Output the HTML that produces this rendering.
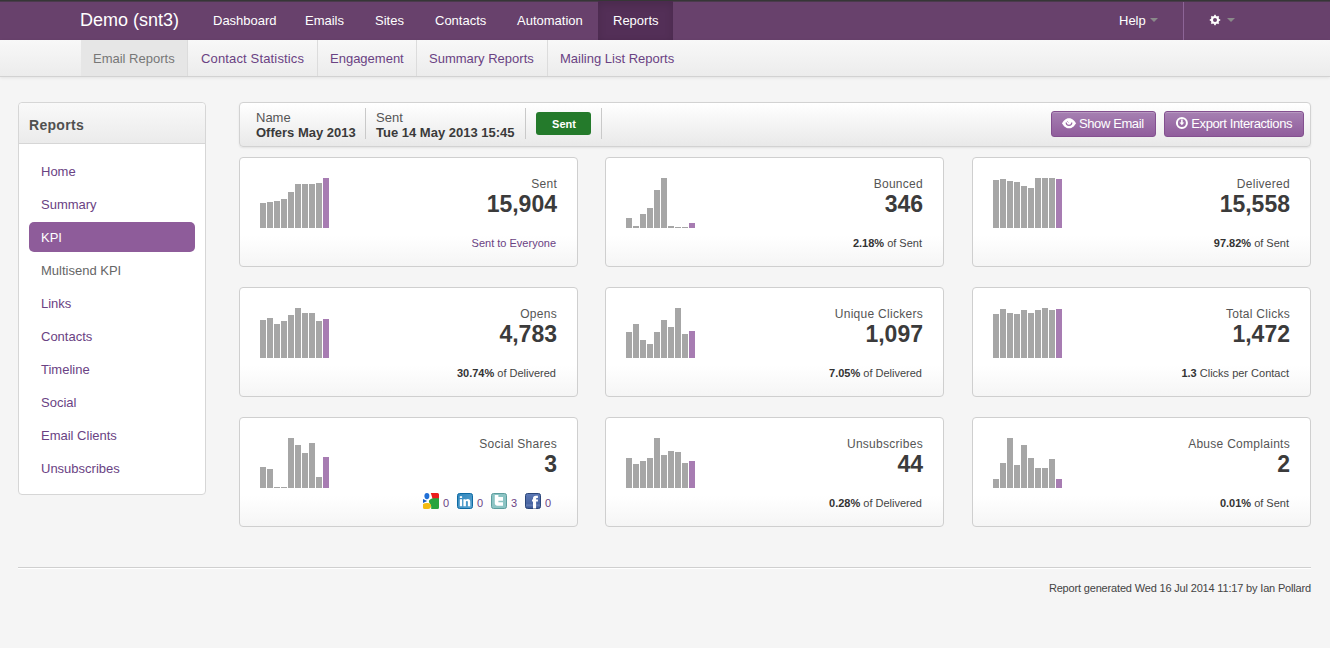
<!DOCTYPE html>
<html><head><meta charset="utf-8">
<style>
*{box-sizing:border-box;margin:0;padding:0}
html,body{width:1330px;height:648px;overflow:hidden}
body{background:#f5f5f5;font-family:"Liberation Sans",sans-serif;font-size:13px;color:#444;position:relative}
.abs{position:absolute}
#nav{position:absolute;left:0;top:0;width:1330px;height:40px;background:#68416c;border-top:1px solid #363636;box-shadow:inset 0 1px 0 #4a3a4c}
#nav .brand{position:absolute;left:80px;top:8px;font-size:18px;color:#fff;line-height:22px}
#nav .it{position:absolute;top:0;height:39px;line-height:39px;color:#fff;font-size:13px;padding:0 15px}
#nav .act{background:#532f57;box-shadow:inset 0 3px 8px rgba(0,0,0,.13)}
#nav .div{position:absolute;left:1183px;top:1px;width:1px;height:38px;background:#8d6597}
.caret{position:absolute;width:0;height:0;border-left:4px solid transparent;border-right:4px solid transparent;border-top:4px solid #8a8a8a}
#sub{position:absolute;left:0;top:40px;width:1330px;height:37px;background:linear-gradient(#f8f8f8,#ececec);border-bottom:1px solid #d2d2d2;box-shadow:0 1px 3px rgba(0,0,0,.08)}
#sub .t{position:absolute;top:0;height:36px;line-height:38px;color:#6a4283;font-size:13px;padding-left:12px;border-left:1px solid #dcdcdc}
#sub .t.act{background:#e6e6e6;color:#777;border-left:none}
#side{position:absolute;left:18px;top:102px;width:188px;height:393px;background:#fff;border:1px solid #d6d6d6;border-radius:4px}
#side .hd{height:41px;background:linear-gradient(#f9f9f9,#ebebeb);border-bottom:1px solid #d6d6d6;border-radius:4px 4px 0 0;font-weight:bold;font-size:14px;color:#505050;padding-left:10px;line-height:44px;letter-spacing:.3px}
#side .li{position:absolute;left:10px;width:166px;height:30px;line-height:30px;padding-left:12px;color:#6a4283;font-size:13px}
#side .li.act{background:#8e5c9a;color:#fff;border-radius:5px}
#side .li.grey{color:#666}
#info{position:absolute;left:239px;top:102px;width:1072px;height:45px;background:linear-gradient(#fff,#e9e9e9);border:1px solid #d2d2d2;border-radius:4px;box-shadow:0 1px 2px rgba(0,0,0,.08)}
.sep{position:absolute;top:5px;width:1px;height:31px;background:#c9c9c9}
.lbl{position:absolute;font-size:13px;color:#555;line-height:15px}
.val{position:absolute;font-size:13px;color:#3a3a3a;font-weight:bold;line-height:15px}
.badge{position:absolute;left:296px;top:9px;width:55px;height:23px;background:#247a2b;border-radius:3px;color:#fff;font-weight:bold;font-size:11px;line-height:24px;text-align:center;padding-left:1px}
.btn{position:absolute;top:8px;height:26px;background:linear-gradient(#a680b2,#905d9c);border:1px solid #83508f;border-radius:3px;color:#fff;font-size:13px;line-height:24px;box-shadow:inset 0 1px 0 rgba(255,255,255,.2)}
.bt{position:absolute;top:0;letter-spacing:-.4px;white-space:nowrap}
.card{position:absolute;width:339px;height:110px;background:linear-gradient(#fff 72%,#f5f5f5);border:1px solid #cfcfcf;border-radius:4px}
.chart{position:absolute;left:20px;top:20px;width:70px;height:50px}
.chart i{position:absolute;bottom:0;width:6px;background:#a6a6a6}
.chart i.p{background:#a77cb2}
.card .ttl{position:absolute;right:20px;top:19px;font-size:12px;color:#555;letter-spacing:.28px;line-height:14px;text-align:right;white-space:nowrap}
.card .num{position:absolute;right:20px;top:33px;font-size:23px;font-weight:bold;color:#3b3b3b;line-height:26px;text-align:right}
.card .ft{position:absolute;right:21px;top:78px;font-size:11px;color:#444;line-height:14px;text-align:right;white-space:nowrap}
.card .ft b{color:#333}
.card .ft.lnk{color:#6a4283}
.sn{position:absolute;top:78px;font-size:11px;line-height:14px;color:#6a4283}
#hr{position:absolute;left:18px;top:567px;width:1293px;height:2px;border-top:1px solid #cfcfcf;border-bottom:1px solid #fff}
#foot{position:absolute;right:19px;top:581px;font-size:11px;color:#444;line-height:14px;letter-spacing:-.17px}
</style></head><body>
<div id="nav">
  <div class="brand">Demo (snt3)</div>
  <div class="it" style="left:198px">Dashboard</div>
  <div class="it" style="left:290px">Emails</div>
  <div class="it" style="left:360px">Sites</div>
  <div class="it" style="left:420px">Contacts</div>
  <div class="it" style="left:502px">Automation</div>
  <div class="it act" style="left:598px;width:75px">Reports</div>
  <div class="it" style="left:1104px">Help</div>
  <div class="caret" style="left:1150px;top:17px"></div>
  <div class="div"></div>
  <svg class="abs" style="left:1209px;top:12.7px" width="12" height="12" viewBox="0 0 12 12"><rect x="5.15" y="0.8" width="1.7" height="2" fill="#fff" transform="rotate(0 6 6)"/><rect x="5.15" y="0.8" width="1.7" height="2" fill="#fff" transform="rotate(45 6 6)"/><rect x="5.15" y="0.8" width="1.7" height="2" fill="#fff" transform="rotate(90 6 6)"/><rect x="5.15" y="0.8" width="1.7" height="2" fill="#fff" transform="rotate(135 6 6)"/><rect x="5.15" y="0.8" width="1.7" height="2" fill="#fff" transform="rotate(180 6 6)"/><rect x="5.15" y="0.8" width="1.7" height="2" fill="#fff" transform="rotate(225 6 6)"/><rect x="5.15" y="0.8" width="1.7" height="2" fill="#fff" transform="rotate(270 6 6)"/><rect x="5.15" y="0.8" width="1.7" height="2" fill="#fff" transform="rotate(315 6 6)"/><circle cx="6" cy="6" r="4.1" fill="#fff"/><circle cx="6" cy="6" r="2" fill="#68416c"/></svg>
  <div class="caret" style="left:1227px;top:17px"></div>
</div>
<div id="sub">
  <div class="t act" style="left:81px;width:106px">Email Reports</div>
  <div class="t" style="left:187px;width:131px;letter-spacing:.15px;padding-left:13px">Contact Statistics</div>
  <div class="t" style="left:317px;width:100px">Engagement</div>
  <div class="t" style="left:416px;width:132px">Summary Reports</div>
  <div class="t" style="left:547px;width:142px">Mailing List Reports</div>
</div>

<div id="side">
  <div class="hd">Reports</div>
  <div class="li" style="top:54px">Home</div>
  <div class="li" style="top:87px">Summary</div>
  <div class="li act" style="top:119px;line-height:32px">KPI</div>
  <div class="li grey" style="top:153px">Multisend KPI</div>
  <div class="li" style="top:186px">Links</div>
  <div class="li" style="top:219px">Contacts</div>
  <div class="li" style="top:252px">Timeline</div>
  <div class="li" style="top:285px">Social</div>
  <div class="li" style="top:318px">Email Clients</div>
  <div class="li" style="top:351px">Unsubscribes</div>
</div>

<div id="info">
  <div class="lbl" style="left:16px;top:7px">Name</div>
  <div class="val" style="left:16px;top:22px">Offers May 2013</div>
  <div class="sep" style="left:125px"></div>
  <div class="lbl" style="left:136px;top:7px">Sent</div>
  <div class="val" style="left:136px;top:22px">Tue 14 May 2013 15:45</div>
  <div class="sep" style="left:285px"></div>
  <div class="badge">Sent</div>
  <div class="sep" style="left:361px"></div>
  <div class="btn" style="left:811px;width:105px"><svg class="abs" style="left:10px;top:6px" width="14" height="11" viewBox="0 0 14 11"><path fill="#fff" d="M7 0.3C3.6 0.3 1.2 3 0.2 5.2 1.2 7.6 3.6 10.3 7 10.3S12.8 7.6 13.8 5.2C12.8 3 10.4 0.3 7 0.3z"/><path d="M4.2 4.6A2.8 2.8 0 0 0 9.8 4.6" fill="none" stroke="#9a69a6" stroke-width="1.2"/><path d="M5.4 3.4l1 1" stroke="#9a69a6" stroke-width="0.9"/></svg><span class="bt" style="left:27px">Show Email</span></div>
  <div class="btn" style="left:924px;width:140px"><svg class="abs" style="left:10px;top:4px" width="14" height="14" viewBox="0 0 14 14"><circle cx="6.9" cy="6.9" r="5" fill="none" stroke="#fff" stroke-width="2"/><path fill="#fff" d="M6.1 3.5h1.6v3h1.6L6.9 9.3 4.5 6.5h1.6z"/></svg><span class="bt" style="left:26.3px">Export Interactions</span></div>
</div>

<div id="cards">
<div class="card" style="left:239px;top:157px"><div class="chart"><i style="left:0px;height:25px"></i><i style="left:7px;height:26px"></i><i style="left:14px;height:27px"></i><i style="left:21px;height:29px"></i><i style="left:28px;height:36px"></i><i style="left:35px;height:44px"></i><i style="left:42px;height:44px"></i><i style="left:49px;height:44px"></i><i style="left:56px;height:45px"></i><i style="left:63px;height:50px" class=p></i></div><div class="ttl">Sent</div><div class="num">15,904</div><div class="ft lnk">Sent to Everyone</div></div>
<div class="card" style="left:605px;top:157px"><div class="chart"><i style="left:0px;height:10px"></i><i style="left:7px;height:2px"></i><i style="left:14px;height:14px"></i><i style="left:21px;height:20px"></i><i style="left:28px;height:38px"></i><i style="left:35px;height:50px"></i><i style="left:42px;height:2px"></i><i style="left:49px;height:1px"></i><i style="left:56px;height:1px"></i><i style="left:63px;height:5px" class=p></i></div><div class="ttl">Bounced</div><div class="num">346</div><div class="ft"><b>2.18%</b> of Sent</div></div>
<div class="card" style="left:972px;top:157px"><div class="chart"><i style="left:0px;height:48px"></i><i style="left:7px;height:49px"></i><i style="left:14px;height:47px"></i><i style="left:21px;height:46px"></i><i style="left:28px;height:42px"></i><i style="left:35px;height:40px"></i><i style="left:42px;height:50px"></i><i style="left:49px;height:50px"></i><i style="left:56px;height:50px"></i><i style="left:63px;height:49px" class=p></i></div><div class="ttl">Delivered</div><div class="num">15,558</div><div class="ft"><b>97.82%</b> of Sent</div></div>
<div class="card" style="left:239px;top:287px"><div class="chart"><i style="left:0px;height:38px"></i><i style="left:7px;height:40px"></i><i style="left:14px;height:34px"></i><i style="left:21px;height:37px"></i><i style="left:28px;height:43px"></i><i style="left:35px;height:50px"></i><i style="left:42px;height:45px"></i><i style="left:49px;height:45px"></i><i style="left:56px;height:37px"></i><i style="left:63px;height:39px" class=p></i></div><div class="ttl">Opens</div><div class="num">4,783</div><div class="ft"><b>30.74%</b> of Delivered</div></div>
<div class="card" style="left:605px;top:287px"><div class="chart"><i style="left:0px;height:26px"></i><i style="left:7px;height:34px"></i><i style="left:14px;height:18px"></i><i style="left:21px;height:14px"></i><i style="left:28px;height:26px"></i><i style="left:35px;height:38px"></i><i style="left:42px;height:31px"></i><i style="left:49px;height:50px"></i><i style="left:56px;height:24px"></i><i style="left:63px;height:27px" class=p></i></div><div class="ttl">Unique Clickers</div><div class="num">1,097</div><div class="ft"><b>7.05%</b> of Delivered</div></div>
<div class="card" style="left:972px;top:287px"><div class="chart"><i style="left:0px;height:44px"></i><i style="left:7px;height:49px"></i><i style="left:14px;height:45px"></i><i style="left:21px;height:44px"></i><i style="left:28px;height:48px"></i><i style="left:35px;height:45px"></i><i style="left:42px;height:48px"></i><i style="left:49px;height:50px"></i><i style="left:56px;height:48px"></i><i style="left:63px;height:49px" class=p></i></div><div class="ttl">Total Clicks</div><div class="num">1,472</div><div class="ft"><b>1.3</b> Clicks per Contact</div></div>
<div class="card" style="left:239px;top:417px"><div class="chart"><i style="left:0px;height:21px"></i><i style="left:7px;height:19px"></i><i style="left:14px;height:1px"></i><i style="left:21px;height:1px"></i><i style="left:28px;height:50px"></i><i style="left:35px;height:43px"></i><i style="left:42px;height:35px"></i><i style="left:49px;height:45px"></i><i style="left:56px;height:11px"></i><i style="left:63px;height:31px" class=p></i></div><div class="ttl">Social Shares</div><div class="num">3</div><svg class="abs" style="left:183px;top:75px" width="16" height="16" viewBox="0 0 16 16"><rect width="16" height="16" rx="1.5" fill="#fff"/><path fill="#ec1c1c" d="M7.8 0h6.7A1.5 1.5 0 0 1 16 1.5V6.2H9.6C9.1 4 8.4 1.8 7.8 0z"/><path fill="#27a43f" d="M16 5.2H11.6C8.4 5.2 5.9 6.6 5.9 8.4 5.9 10.2 8.2 11.5 8.2 13.6V16H14.5A1.5 1.5 0 0 0 16 14.5z"/><ellipse cx="3.9" cy="3.1" rx="2.5" ry="3.1" fill="#1f6fd6"/><path fill="#1a5cbf" d="M0 5.9L4.2 8.1 0 10z"/><path fill="#f3bb10" d="M0 11.2C1.2 10.2 2.8 10 4.6 10 6.8 10 8 11.3 8 13 8 14.8 6.8 16 5 16H1.5A1.5 1.5 0 0 1 0 14.5z"/></svg>
<span class="sn" style="left:203px">0</span>
<svg class="abs" style="left:217px;top:75px" width="16" height="16" viewBox="0 0 16 16"><defs><linearGradient id="li" x1="0" y1="0" x2="1" y2="1"><stop offset="0" stop-color="#2f86bd"/><stop offset="1" stop-color="#5aa3cf"/></linearGradient></defs><rect x=".5" y=".5" width="15" height="15" rx="2" fill="url(#li)" stroke="#0e6aa3"/><rect x="2.8" y="3.2" width="2.3" height="1.8" fill="#fff"/><rect x="2.8" y="6.2" width="2.3" height="7" fill="#fff"/><path fill="#fff" d="M6.4 6.2h2.2v.9c.5-.7 1.3-1.1 2.3-1.1 1.6 0 2.3 1 2.3 2.6v4.6h-2.3V8.9c0-.6-.3-.9-.9-.9s-1.1.3-1.1 1v4.2H6.4z"/></svg>
<span class="sn" style="left:237px">0</span>
<svg class="abs" style="left:251px;top:75px" width="16" height="16" viewBox="0 0 16 16"><rect x=".5" y=".5" width="15" height="15" rx="2" fill="#8cc4c4" stroke="#5c9d9d"/><path fill="#fff" d="M3.8 2h3.6v2.1H12v3.6H7.4v1.5H12v3.6H6.3C4.9 12.8 3.8 11.7 3.8 10.3z"/></svg>
<span class="sn" style="left:271px">3</span>
<svg class="abs" style="left:285px;top:75px" width="16" height="16" viewBox="0 0 16 16"><defs><linearGradient id="fb" x1="0" y1="0" x2="0" y2="1"><stop offset="0" stop-color="#5c78b5"/><stop offset="1" stop-color="#3f5b98"/></linearGradient></defs><rect x=".5" y=".5" width="15" height="15" rx="2" fill="url(#fb)" stroke="#2b4679"/><rect x="1" y="11.3" width="14" height="2.1" fill="#6e87ba" opacity=".6"/><path fill="#fff" d="M8 15.5V8.5H7V6.4H8V5.6C8 3.8 9 2.8 10.8 2.8H12.9V5H11.6C11.2 5 11.1 5.2 11.1 5.6V6.4H12.9V8.5H11.1V15.5z"/></svg>
<span class="sn" style="left:305px">0</span></div>
<div class="card" style="left:605px;top:417px"><div class="chart"><i style="left:0px;height:30px"></i><i style="left:7px;height:24px"></i><i style="left:14px;height:27px"></i><i style="left:21px;height:30px"></i><i style="left:28px;height:50px"></i><i style="left:35px;height:33px"></i><i style="left:42px;height:37px"></i><i style="left:49px;height:36px"></i><i style="left:56px;height:25px"></i><i style="left:63px;height:27px" class=p></i></div><div class="ttl">Unsubscribes</div><div class="num">44</div><div class="ft"><b>0.28%</b> of Delivered</div></div>
<div class="card" style="left:972px;top:417px"><div class="chart"><i style="left:0px;height:9px"></i><i style="left:7px;height:25px"></i><i style="left:14px;height:50px"></i><i style="left:21px;height:23px"></i><i style="left:28px;height:43px"></i><i style="left:35px;height:30px"></i><i style="left:42px;height:20px"></i><i style="left:49px;height:20px"></i><i style="left:56px;height:29px"></i><i style="left:63px;height:9px" class=p></i></div><div class="ttl">Abuse Complaints</div><div class="num">2</div><div class="ft"><b>0.01%</b> of Sent</div></div>
</div><!--/cards-->

<div id="hr"></div>
<div id="foot">Report generated Wed 16 Jul 2014 11:17 by Ian Pollard</div>
</body></html>
